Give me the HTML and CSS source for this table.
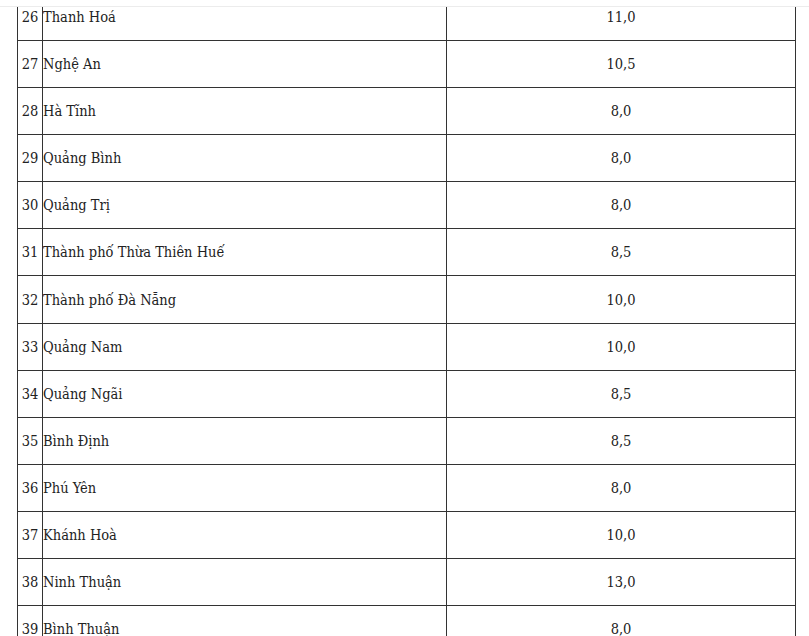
FILE: index.html
```html
<!DOCTYPE html>
<html lang="vi">
<head>
<meta charset="utf-8">
<title>Bảng</title>
<link rel="stylesheet" href="styles.css">
</head>
<body>
<div class="topbar"></div>
<div class="wrap">
<table class="data">
<colgroup><col class="c-no"><col class="c-name"><col class="c-val"></colgroup>
<tbody>
<tr><td class="no">26</td><td class="name">Thanh Hoá</td><td class="val">11,0</td></tr>
<tr><td class="no">27</td><td class="name">Nghệ An</td><td class="val">10,5</td></tr>
<tr><td class="no">28</td><td class="name">Hà Tĩnh</td><td class="val">8,0</td></tr>
<tr><td class="no">29</td><td class="name">Quảng Bình</td><td class="val">8,0</td></tr>
<tr><td class="no">30</td><td class="name">Quảng Trị</td><td class="val">8,0</td></tr>
<tr><td class="no">31</td><td class="name">Thành phố Thừa Thiên Huế</td><td class="val">8,5</td></tr>
<tr><td class="no">32</td><td class="name">Thành phố Đà Nẵng</td><td class="val">10,0</td></tr>
<tr><td class="no">33</td><td class="name">Quảng Nam</td><td class="val">10,0</td></tr>
<tr><td class="no">34</td><td class="name">Quảng Ngãi</td><td class="val">8,5</td></tr>
<tr><td class="no">35</td><td class="name">Bình Định</td><td class="val">8,5</td></tr>
<tr><td class="no">36</td><td class="name">Phú Yên</td><td class="val">8,0</td></tr>
<tr><td class="no">37</td><td class="name">Khánh Hoà</td><td class="val">10,0</td></tr>
<tr><td class="no">38</td><td class="name">Ninh Thuận</td><td class="val">13,0</td></tr>
<tr><td class="no">39</td><td class="name">Bình Thuận</td><td class="val">8,0</td></tr>
<tr><td class="no">40</td><td class="name">Kon Tum</td><td class="val">8,0</td></tr>
</tbody>
</table>
</div>
</body>
</html>
```
FILE: styles.css
```css
html, body {
  margin: 0;
  padding: 0;
  background: #fff;
}
body {
  font-family: "DejaVu Serif Condensed", "DejaVu Serif", "Liberation Serif", serif;
  font-stretch: semi-condensed;
  font-size: 14.5px;
  color: #222;
  overflow: hidden;
}
.topbar {
  position: fixed;
  top: 0;
  left: 0;
  right: 0;
  height: 6px;
  background: #fff;
  border-bottom: 1px solid #ececec;
  z-index: 2;
}
.wrap {
  padding-left: 17px;
  margin-top: -7px;
}
.data {
  border-collapse: collapse;
  table-layout: fixed;
  width: 778px;
}
.c-no { width: 25px; }
.c-name { width: 404px; }
.c-val { width: 349px; }
.data td {
  border: 1px solid #333;
  height: 46.08px;
  padding: 0;
  vertical-align: middle;
  line-height: 20px;
  white-space: nowrap;
}
.data td.no {
  text-align: center;
}
.data td.name {
  text-align: left;
}
.data td.val {
  text-align: center;
}
```
